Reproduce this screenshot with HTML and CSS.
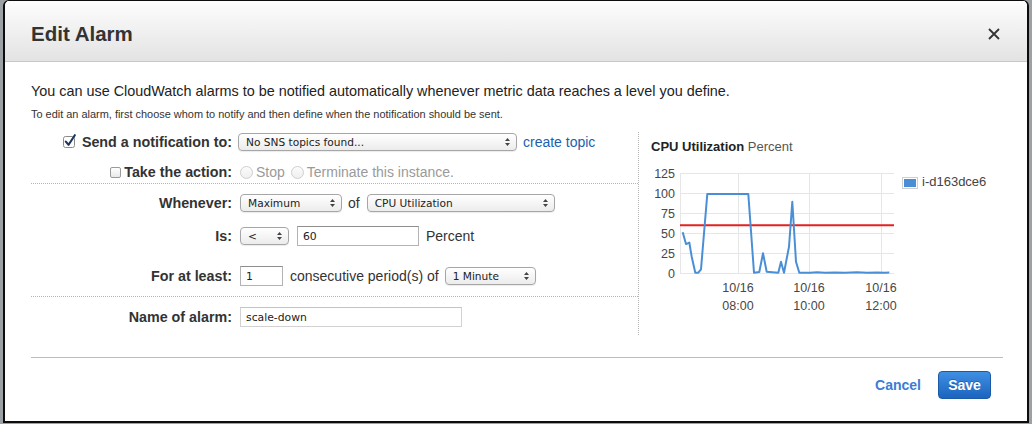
FILE: index.html
```html
<!DOCTYPE html>
<html>
<head>
<meta charset="utf-8">
<title>Edit Alarm</title>
<link rel="stylesheet" href="styles.css">
</head>
<body>
<div class="dialog">
  <div class="header">
    <h1 class="title">Edit Alarm</h1>
    <svg class="close" width="12" height="12" viewBox="0 0 12 12"><path d="M1 1L11 11M11 1L1 11" stroke="#333" stroke-width="1.8" fill="none"/></svg>
  </div>
  <div class="body">
    <p class="intro">You can use CloudWatch alarms to be notified automatically whenever metric data reaches a level you define.</p>
    <p class="sub">To edit an alarm, first choose whom to notify and then define when the notification should be sent.</p>
    <div class="main">
      <div class="form">
        <div class="row">
          <div class="label">
            <svg class="check" width="14" height="14" viewBox="0 0 14 14"><rect x="0.5" y="2.5" width="11" height="11" rx="2" fill="#fdfdfd" stroke="#8a8a8a"/><path d="M2.8 7.6L5.6 10.8L11.8 1.2" stroke="#1d3460" stroke-width="2.1" fill="none" stroke-linecap="round" stroke-linejoin="round"/></svg>
            <span>Send a notification to:</span>
          </div>
          <div class="select sel-sns">
            <span>No SNS topics found...</span>
            <svg class="arrows" width="5" height="8" viewBox="0 0 5 8"><path d="M0 3L2.5 0L5 3Z M0 5L2.5 8L5 5Z" fill="#444"/></svg>
          </div>
          <a class="link">create topic</a>
        </div>
        <div class="section sec-action">
          <div class="row">
            <div class="label">
              <span class="box"></span>
              <span>Take the action:</span>
            </div>
            <span class="radio"></span><span class="dis">Stop</span>
            <span class="radio radio2"></span><span class="dis">Terminate this instance.</span>
          </div>
        </div>
        <div class="section sec-cond">
          <div class="row">
            <div class="label"><span>Whenever:</span></div>
            <div class="select sel-max">
              <span>Maximum</span>
              <svg class="arrows" width="5" height="8" viewBox="0 0 5 8"><path d="M0 3L2.5 0L5 3Z M0 5L2.5 8L5 5Z" fill="#444"/></svg>
            </div>
            <span class="txt gap6">of</span>
            <div class="select sel-cpu gap7">
              <span>CPU Utilization</span>
              <svg class="arrows" width="5" height="8" viewBox="0 0 5 8"><path d="M0 3L2.5 0L5 3Z M0 5L2.5 8L5 5Z" fill="#444"/></svg>
            </div>
          </div>
          <div class="row row-is">
            <div class="label"><span>Is:</span></div>
            <div class="select sel-op">
              <span>&lt;</span>
              <svg class="arrows" width="5" height="8" viewBox="0 0 5 8"><path d="M0 3L2.5 0L5 3Z M0 5L2.5 8L5 5Z" fill="#444"/></svg>
            </div>
            <div class="input in-val gap8">60</div>
            <span class="txt gap7">Percent</span>
          </div>
          <div class="row row-for">
            <div class="label"><span>For at least:</span></div>
            <div class="input in-per">1</div>
            <span class="txt gap7">consecutive period(s) of</span>
            <div class="select sel-min gap6">
              <span>1 Minute</span>
              <svg class="arrows" width="5" height="8" viewBox="0 0 5 8"><path d="M0 3L2.5 0L5 3Z M0 5L2.5 8L5 5Z" fill="#444"/></svg>
            </div>
          </div>
        </div>
        <div class="section sec-name">
          <div class="row">
            <div class="label"><span>Name of alarm:</span></div>
            <div class="input in-name">scale-down</div>
          </div>
        </div>
      </div>
      <div class="chart">
        <div class="chart-title"><b>CPU Utilization</b> <span class="unit">Percent</span></div>
        <svg class="plot" width="370" height="165" viewBox="6 0 370 165">
          <g stroke="#e6e6e6" stroke-width="1" fill="none">
            <path d="M35 13.5H249M35 33.5H249M35 53.5H249M35 73.5H249M35 93.5H249M35 113.5H249"/>
            <path d="M35.5 13V114M93.5 13V114M164.5 13V114M236.5 13V114"/>
          </g>
          <g font-family="Liberation Sans, Arial, sans-serif" font-size="12.5" fill="#474747" text-anchor="end">
            <text x="30" y="17.5">125</text>
            <text x="30" y="37.5">100</text>
            <text x="30" y="57.5">75</text>
            <text x="30" y="77.5">50</text>
            <text x="30" y="97.5">25</text>
            <text x="30" y="117.5">0</text>
          </g>
          <g font-family="Liberation Sans, Arial, sans-serif" font-size="12.5" fill="#474747" text-anchor="middle">
            <text x="93" y="132">10/16</text>
            <text x="164" y="132">10/16</text>
            <text x="236" y="132">10/16</text>
            <text x="93" y="150">08:00</text>
            <text x="164" y="150">10:00</text>
            <text x="236" y="150">12:00</text>
          </g>
          <path d="M35 65.3H249" stroke="#e3211f" stroke-width="2"/>
          <polyline fill="none" stroke="#4a8fd6" stroke-width="2" stroke-linejoin="round" points="37.7,72.3 41,84 42.5,83.5 44.3,82.5 46.7,96.7 50.3,112.7 53.3,112.7 56,109.3 62.3,34 103.3,34 109,112.7 114.3,112 118,93.3 121.7,111.7 133.3,112.7 136,101.7 139,112.7 144,86.7 147.3,41.7 151,101.7 154.3,112.7 165,112.7 172,112.2 180,112.7 190,112.4 200,112.7 212,112.3 222,112.7 232,112.4 240,112.7 244.3,112.5"/>
          <rect x="257.5" y="17.5" width="15" height="11" fill="#fff" stroke="#cfcfcf"/>
          <rect x="259" y="19" width="12" height="8" fill="#4a8fd6"/>
          <text x="277" y="25.5" font-family="Liberation Sans, Arial, sans-serif" font-size="13" fill="#444">i-d163dce6</text>
        </svg>
      </div>
    </div>
    <div class="rule"></div>
    <div class="footer">
      <a class="cancel">Cancel</a>
      <span class="save">Save</span>
    </div>
  </div>
</div>
</body>
</html>
```

FILE: styles.css
```css
* { box-sizing: border-box; }
html, body { margin: 0; padding: 0; }
body {
  width: 1032px;
  height: 424px;
  overflow: hidden;
  background: #9ca1a6;
  font-family: "Liberation Sans", Arial, sans-serif;
  color: #333;
}
.dialog {
  margin-left: 3px;
  width: 1026px;
  height: 423px;
  background: #fff;
  border: 2px solid #0d0d0d;
  border-top-width: 1px;
  border-radius: 6px 6px 0 0;
  overflow: hidden;
}
.header {
  height: 61px;
  padding: 6px 27px 0 26px;
  display: flex;
  align-items: center;
  justify-content: space-between;
  background: linear-gradient(#fdfdfd, #e3e3e3);
  border-bottom: 1px solid #c7c7c7;
}
.title {
  margin: 0;
  font-size: 20.5px;
  line-height: 24px;
  font-weight: bold;
  color: #333;
}
.close { display: block; }
.body {
  padding: 0 24px 0 26px;
}
.intro {
  margin: 20px 0 0;
  font-size: 14.4px;
  line-height: 18px;
  color: #222;
  white-space: nowrap;
}
.sub {
  margin: 7px 0 0;
  font-size: 10.95px;
  line-height: 14px;
  color: #333;
  white-space: nowrap;
}
.main {
  margin-top: 11px;
  display: flex;
}
.form {
  width: 608px;
  flex-shrink: 0;
  border-right: 1px dotted #b5b5b5;
  padding-bottom: 8px;
}
.row {
  height: 20px;
  display: flex;
  align-items: center;
  font-size: 14px;
}
.label {
  width: 201px;
  flex-shrink: 0;
  margin-right: 8px;
  display: flex;
  align-items: center;
  justify-content: flex-end;
  font-weight: bold;
  font-size: 14.3px;
  color: #333;
  white-space: nowrap;
}
.check { margin-right: 5px; margin-top: -3px; }
.box {
  width: 11px;
  height: 11px;
  margin-right: 3px;
  border: 1px solid #9a9a9a;
  border-radius: 2px;
  background: linear-gradient(#fff, #e9e9e9);
}
.section { border-bottom: 1px dotted #b5b5b5; }
.sec-action { padding-top: 10px; padding-bottom: 1px; }
.sec-cond { padding-top: 9px; padding-bottom: 10px; }
.row-is { margin-top: 13px; }
.row-for { margin-top: 20px; }
.sec-name { border-bottom: none; padding-top: 10px; }
.select {
  height: 18px;
  display: flex;
  align-items: center;
  justify-content: space-between;
  padding: 0 6px 0 7px;
  border: 1px solid #a6a6a6;
  border-radius: 4px;
  background: linear-gradient(#ffffff, #ececec);
  box-shadow: 0 1px 1px rgba(0, 0, 0, 0.08);
  font-family: "DejaVu Sans", sans-serif;
  font-size: 10.6px;
  color: #222;
  white-space: nowrap;
}
.arrows { flex-shrink: 0; }
.sel-sns { width: 279px; margin-left: -2px; }
.sel-max { width: 102px; }
.sel-cpu { width: 188px; }
.sel-op { width: 49px; }
.sel-min { width: 91px; }
.link {
  margin-left: 6px;
  color: #1b5fad;
  font-size: 14px;
}
.radio {
  width: 13px;
  height: 13px;
  border-radius: 50%;
  border: 1px solid #cfcfcf;
  background: linear-gradient(#fbfbfb, #efefef);
  margin-right: 3px;
}
.radio2 { margin-left: 6px; }
.dis { color: #9a9a9a; font-size: 14px; }
.txt { font-size: 14px; color: #333; white-space: nowrap; }
.gap6 { margin-left: 6px; }
.gap7 { margin-left: 7px; }
.gap8 { margin-left: 8px; }
.input {
  height: 20px;
  display: flex;
  align-items: center;
  padding-left: 5px;
  border: 1px solid #b3b3b3;
  border-top-color: #8e8e8e;
  background: #fff;
  font-family: "DejaVu Sans", sans-serif;
  font-size: 10.8px;
  color: #222;
}
.in-val { width: 122px; }
.in-per { width: 43px; }
.in-name { width: 222px; border-color: #d2d2d2; border-top-color: #c4c4c4; }
.chart {
  padding: 7px 0 0 12px;
}
.chart-title {
  font-size: 13px;
  line-height: 16px;
  color: #222;
  white-space: nowrap;
}
.unit { color: #555; }
.plot { display: block; margin-top: 5px; }
.rule {
  margin-top: 22px;
  border-top: 1px solid #bdbdbd;
}
.footer {
  margin-top: 13px;
  padding-right: 12px;
  display: flex;
  justify-content: flex-end;
  align-items: center;
}
.cancel {
  margin-right: 17px;
  font-size: 14px;
  font-weight: bold;
  color: #3a7dd6;
}
.save {
  width: 53px;
  height: 28px;
  display: flex;
  align-items: center;
  justify-content: center;
  border: 1px solid #1d5aa6;
  border-radius: 4px;
  background: linear-gradient(#3f8fe2, #1b64bf);
  color: #fff;
  font-size: 14px;
  font-weight: bold;
  text-shadow: 0 -1px 0 rgba(0, 0, 0, 0.25);
}
```
